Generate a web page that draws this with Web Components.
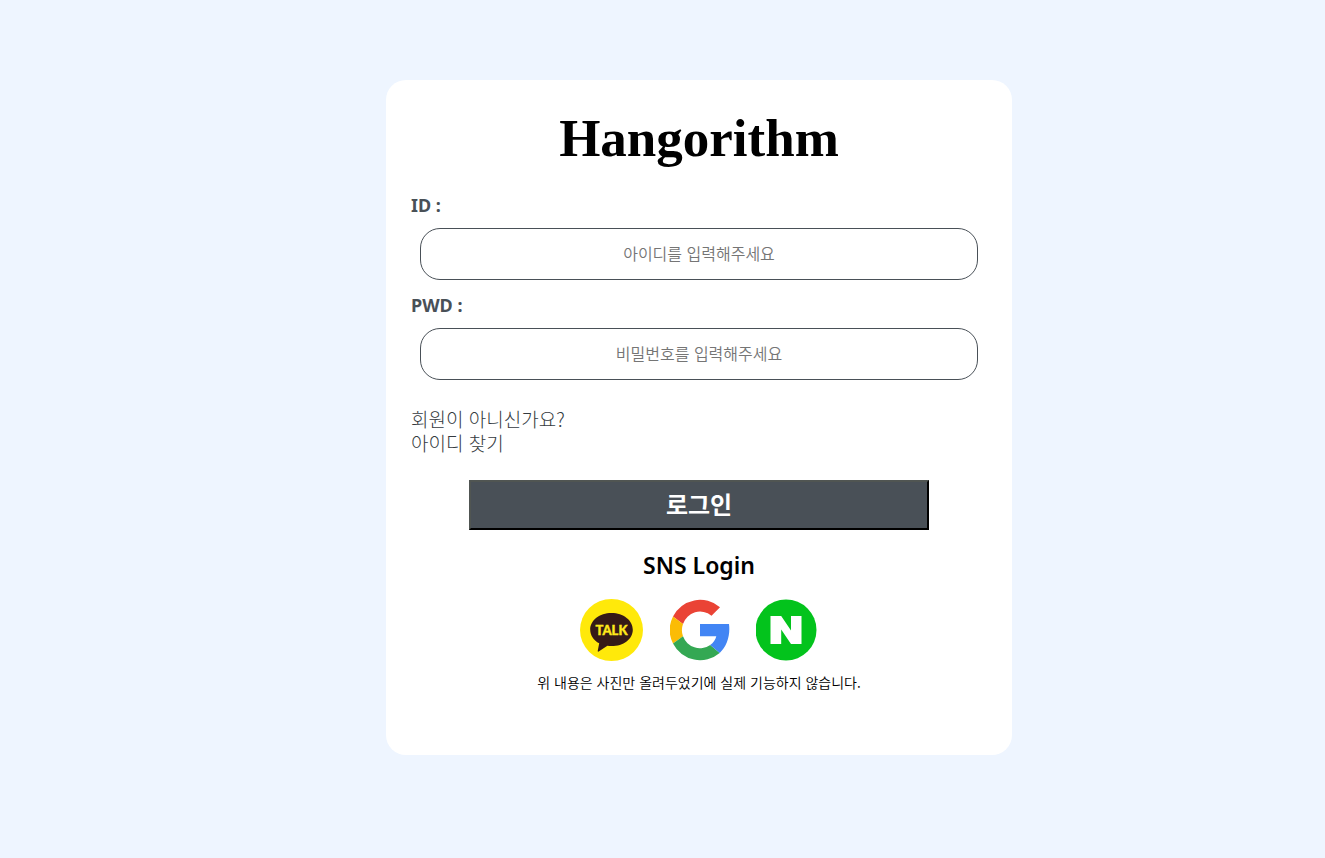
<!DOCTYPE html>
<html lang="ko">
<head>
<meta charset="utf-8">
<meta name="viewport" content="width=device-width, initial-scale=1">
<title>Hangorithm</title>
<style>
  body {
    margin: 0;
    min-height: 100vh;
    background: #eef5ff;
    color: #000;
    font-family: "Noto Sans", "Noto Sans CJK KR", sans-serif;
  }
</style>
</head>
<body>
<login-page></login-page>

<template id="login-page">
  <style>
    :host { display: block; padding: 80px 0 80px 73px; }
    login-card { max-width: 626px; margin: 0 auto; }
  </style>
  <login-card>
    <span slot="title">Hangorithm</span>
    <login-field label="ID :" type="text" placeholder="아이디를 입력해주세요"></login-field>
    <login-field label="PWD :" type="password" placeholder="비밀번호를 입력해주세요"></login-field>
    <help-links slot="links"></help-links>
    <submit-button slot="action">로그인</submit-button>
    <sns-login slot="sns">위 내용은 사진만 올려두었기에 실제 기능하지 않습니다.</sns-login>
  </login-card>
</template>

<template id="login-card">
  <style>
    :host {
      display: block;
      box-sizing: border-box;
      padding: 24px 25px 61px;
      background: #fff;
      border-radius: 20px;
    }
    h1 {
      margin: 0 0 20px;
      font: bold 53px/68px "Liberation Serif", serif;
      text-align: center;
    }
    form { margin: 0; }
  </style>
  <h1><slot name="title"></slot></h1>
  <form>
    <slot></slot>
    <slot name="links"></slot>
    <slot name="action"></slot>
  </form>
  <slot name="sns"></slot>
</template>

<template id="login-field">
  <style>
    :host { display: block; margin-bottom: 12px; }
    label {
      display: block;
      margin-bottom: 10px;
      color: #495057;
      font-size: 18px;
      line-height: 26px;
      font-weight: 700;
    }
    .box { padding: 0 9px; }
    input {
      display: block;
      box-sizing: border-box;
      width: 100%;
      height: 52px;
      padding: 0 16px 2px;
      border: 1px solid #495057;
      border-radius: 20px;
      outline: none;
      background: #fff;
      color: #495057;
      font: 350 16px/24px "Noto Sans CJK KR", sans-serif;
      text-align: center;
    }
    input::placeholder { color: #757575; opacity: 1; }
  </style>
  <label for="field"></label>
  <div class="box"><input id="field"></div>
</template>

<template id="help-links">
  <style>
    :host { display: block; margin: 27px 0 25px; }
    a {
      display: block;
      width: fit-content;
      color: #343a40;
      font: 300 19px/24px "Noto Sans CJK KR", sans-serif;
      text-decoration: none;
    }
  </style>
  <a href="#join">회원이 아니신가요?</a>
  <a href="#find">아이디 찾기</a>
</template>

<template id="submit-button">
  <style>
    :host { display: block; padding: 0 58px; }
    button {
      display: block;
      width: 100%;
      height: 50px;
      padding: 0 0 2px;
      border: 2px solid;
      border-color: #505552 #000 #000 #505552;
      border-radius: 0;
      background: #495057;
      color: #fff;
      font: bold 24px/32px "Noto Sans CJK KR", sans-serif;
      cursor: pointer;
    }
  </style>
  <button type="button"><slot></slot></button>
</template>

<template id="sns-login">
  <style>
    :host { display: block; margin-top: 19px; text-align: center; }
    h2 { margin: 0 0 17px; font-size: 23px; line-height: 32px; font-weight: 600; }
    .icons { display: flex; justify-content: center; gap: 26px; }
    svg { display: block; width: auto; height: 64px; }
    p { margin: 8px 0 0; font: 350 14px/24px "Noto Sans CJK KR", sans-serif; }
  </style>
  <h2>SNS Login</h2>
  <div class="icons">
    <svg viewBox="0 0 64 64" role="img" aria-label="Kakao">
      <ellipse cx="31.500" cy="32" rx="31.500" ry="31" fill="#ffe90a"/>
      <path d="M31.500 15C19.500 15 10.200 22.400 10.200 31.700c0 5.700 3.500 10.600 9 13.600l-1.500 7.600c-.1.600.5 1 1 .6l8.700-5.700c1.300.2 2.700.3 4.100.3 12 0 21.300-7.200 21.300-16.400S43.500 15 31.500 15Z" fill="#351a17"/>
      <text x="31.500" y="37" text-anchor="middle" font-family="Lato, sans-serif" font-size="13" font-weight="900" fill="#ffe81a" stroke="#ffe81a" stroke-width=".4">TALK</text>
    </svg>
    <svg viewBox="0 0 60 64" role="img" aria-label="Google">
      <path d="M3 18.500A30.300 30.300 0 0 1 50 9.300L41.500 17.700A18 18 0 0 0 13 26Z" fill="#ea4335"/>
      <path d="M3 18.500A30.300 30.300 0 0 0 3 45.500L13 38.300A18 18 0 0 1 13 26Z" fill="#fbbc05"/>
      <path d="M3 45.500A30.300 30.300 0 0 0 49.700 54.900L40.200 46.900A18 18 0 0 1 13 38.300Z" fill="#34a853"/>
      <path d="M30 26H59C60.400 37 57.200 48 49.700 54.900L40.200 46.900C43.400 44.800 45.500 41.700 46.300 38.200H30Z" fill="#4285f4"/>
    </svg>
    <svg viewBox="0 0 62 64" role="img" aria-label="Naver">
      <circle cx="30" cy="32" r="30.500" fill="#03c31c"/>
      <path d="M14.500 18H25.200L35 32.500V18H45.500V46H35L25.200 31.500V46H14.500Z" fill="#fff"/>
    </svg>
  </div>
  <p><slot></slot></p>
</template>

<script>
  class TemplateElement extends HTMLElement {
    constructor() {
      super();
      const template = document.getElementById(this.localName);
      this.attachShadow({ mode: "open" }).append(template.content.cloneNode(true));
    }
  }

  class LoginField extends TemplateElement {
    connectedCallback() {
      const input = this.shadowRoot.querySelector("input");
      this.shadowRoot.querySelector("label").textContent = this.getAttribute("label");
      input.type = this.getAttribute("type");
      input.placeholder = this.getAttribute("placeholder");
    }
  }

  customElements.define("login-field", LoginField);
  customElements.define("help-links", class extends TemplateElement {});
  customElements.define("submit-button", class extends TemplateElement {});
  customElements.define("sns-login", class extends TemplateElement {});
  customElements.define("login-card", class extends TemplateElement {});
  customElements.define("login-page", class extends TemplateElement {});
</script>
</body>
</html>
